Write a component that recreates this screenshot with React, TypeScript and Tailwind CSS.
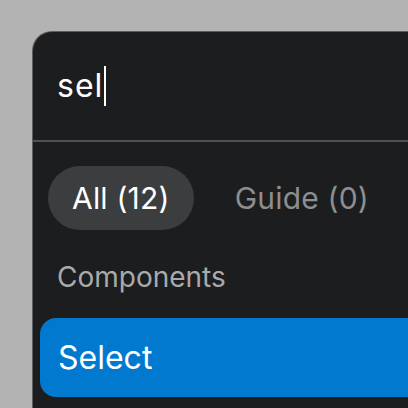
export default function App() {
  return (
    <div
      className="w-[408px] h-[408px] bg-[#b3b3b3] pt-[31px] pl-[32px] overflow-hidden"
      style={{ fontFamily: "Inter, 'Noto Sans', sans-serif" }}
    >
      <div className="w-[420px] h-[420px] bg-[#1c1d1f] rounded-tl-[20px] border-l border-t border-[#8a8a8a]/60 flex flex-col">
        <div className="h-[108px] flex items-center pl-[24px]">
          <span className="text-[32px] text-white leading-none tracking-[1px]">sel</span>
          <span className="w-[2px] h-[40px] bg-white ml-[1px]" />
        </div>
        <div className="h-[2px] bg-[#505153]" />
        <div className="flex items-center gap-[17px] pl-[15px] mt-[24px]">
          <div className="h-[64px] px-[24px] rounded-full bg-[#3c3d3f] flex items-center text-white text-[30px] tracking-[0.2px]">
            All (12)
          </div>
          <div className="h-[64px] px-[24px] flex items-center text-[#8d8e90] text-[30px] tracking-[0.2px]">
            Guide (0)
          </div>
        </div>
        <div className="pl-[24px] mt-[33px] text-[28px] text-[#a9aaab] leading-none">
          Components
        </div>
        <div className="ml-[7px] mt-[27px] h-[79px] rounded-l-[16px] bg-[#0079cf] flex items-center pl-[18px] text-white text-[32px]">
          Select
        </div>
      </div>
    </div>
  );
}
